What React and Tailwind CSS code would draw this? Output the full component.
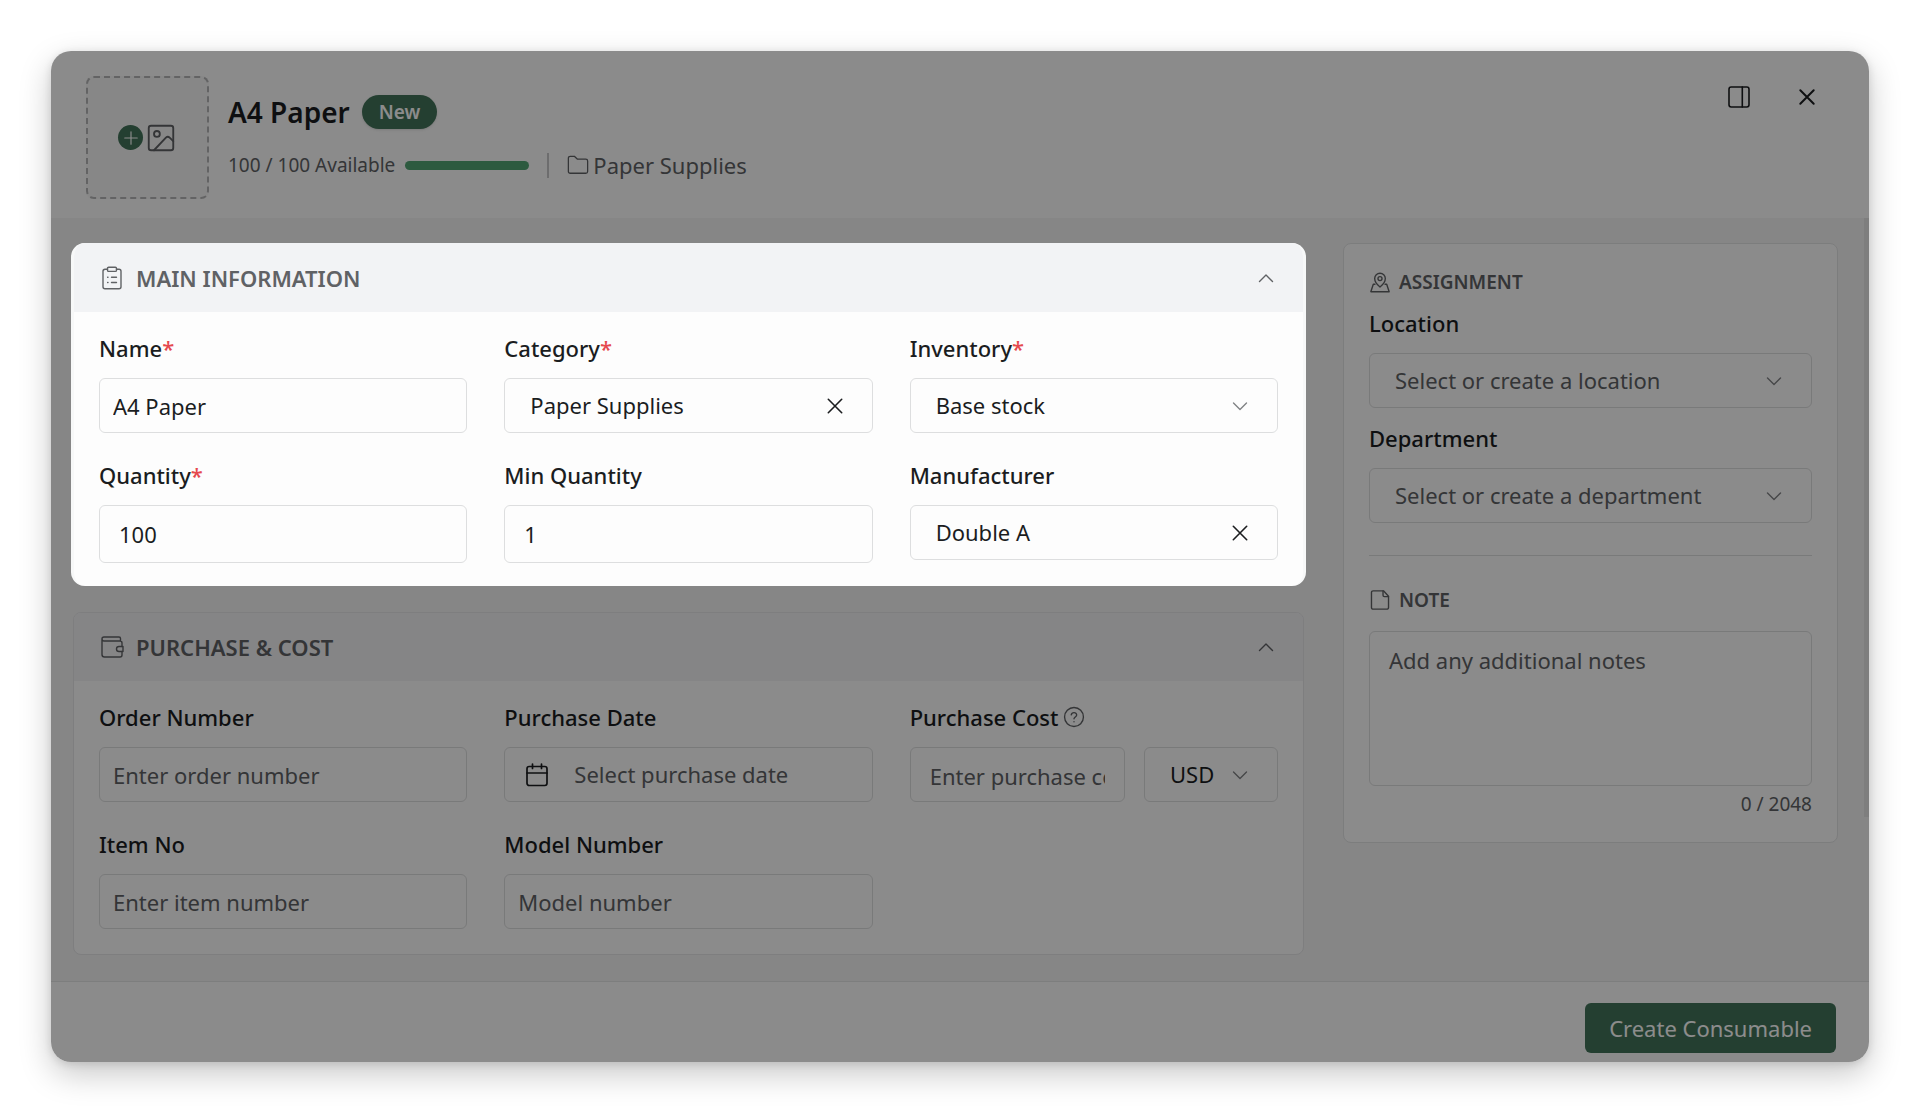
import { useState } from 'react'
import clsx from 'clsx'

const NOTE_LIMIT = 2048

const FIELD =
  'w-full h-[55px] rounded-md border border-[#dddedf] bg-transparent text-[22px] text-[#1b1d1f] placeholder:text-[#606265] placeholder:opacity-100 outline-none'

// ---- Icons ----

function Icon({ size = 24, stroke = 1.5, className, children }) {
  return (
    <svg
      width={size}
      height={size}
      viewBox="0 0 24 24"
      fill="none"
      stroke="currentColor"
      strokeWidth={stroke}
      strokeLinecap="round"
      strokeLinejoin="round"
      aria-hidden="true"
      className={clsx('shrink-0', className)}
    >
      {children}
    </svg>
  )
}

const ClipboardIcon = () => (
  <Icon stroke={1.4}>
    <path d="M7.5 3.300H5A2 2 0 0 0 3 5.300v15.500A2 2 0 0 0 5 22.800h14a2 2 0 0 0 2-2V5.300a2 2 0 0 0-2-2h-2.500" />
    <rect x="7.500" y="1.200" width="9" height="4.200" rx="1.200" />
    <path d="M7.600 11.300h.4M11.500 11.300h5M7.600 16.500h.4M11.500 16.500h5" />
  </Icon>
)

const WalletIcon = () => (
  <Icon stroke={1.4}>
    <path d="M20.500 6V3.500a1.500 1.500 0 0 0-1.500-1.500H4a2 2 0 0 0-2 2v15.500A2.500 2.500 0 0 0 4.500 22H20a2 2 0 0 0 2-2v-3.500M2 4a2 2 0 0 0 2 2h16a2 2 0 0 1 2 2v3.500" />
    <path d="M23 11.500h-4a2.500 2.500 0 0 0 0 5h4z" />
  </Icon>
)

const MapPinIcon = () => (
  <Icon size={22} stroke={1.5}>
    <path d="M12 17.500s-5.800-4.700-5.800-9.300a5.800 5.800 0 0 1 11.600 0c0 4.600-5.800 9.300-5.800 9.300z" />
    <circle cx="12" cy="8.300" r="2.200" />
    <path d="M6.500 14.500H4.700L2 22.600h20l-2.700-8.100h-1.800" />
  </Icon>
)

const NoteIcon = () => (
  <Icon size={22} stroke={1.5}>
    <path d="M15.800 2H4.500A1.800 1.800 0 0 0 2.700 3.800v16.400A1.800 1.800 0 0 0 4.500 22h15a1.800 1.800 0 0 0 1.800-1.800V8z" />
    <path d="M15.300 2v4.800A1.500 1.500 0 0 0 16.800 8.300h4.500" />
  </Icon>
)

const FolderIcon = () => (
  <Icon size={22} stroke={1.4}>
    <path d="M1.500 4.500A2 2 0 0 1 3.500 2.500H8l3.200 3h9.300a2 2 0 0 1 2 2V19a2 2 0 0 1-2 2h-17a2 2 0 0 1-2-2z" />
  </Icon>
)

const CalendarIcon = () => (
  <Icon size={24} stroke={1.7}>
    <rect x="2" y="3.500" width="20" height="19" rx="2.200" />
    <path d="M2 10h20M7.500 1v4.500M16.500 1v4.500" />
  </Icon>
)

const HelpIcon = () => (
  <Icon size={22} stroke={1.5}>
    <circle cx="12" cy="12" r="10.300" />
    <path d="M9 9.600A3 3 0 0 1 12 7.200a2.700 2.700 0 0 1 2.900 2.600c0 2-2.900 2.300-2.900 4.200M12 17.200v.1" />
  </Icon>
)

const PictureIcon = () => (
  <Icon size={28} stroke={1.6}>
    <rect x="1.500" y="1.500" width="21" height="21" rx="2" />
    <circle cx="8.500" cy="8.500" r="2.500" />
    <path d="M6 22.500L16.200 11.700a2.300 2.300 0 0 1 3.200 0l3.100 3" />
  </Icon>
)

const PanelIcon = () => (
  <Icon size={24} stroke={1.6}>
    <rect x="2" y="2" width="20" height="20" rx="2.200" />
    <path d="M15.300 2v20" />
  </Icon>
)

const CloseIcon = ({ size = 24, stroke = 1.6 }) => (
  <Icon size={size} stroke={stroke}>
    <path d="M5.300 5.300l13.400 13.400M18.700 5.300L5.300 18.700" />
  </Icon>
)

const ChevronIcon = ({ up, className }) => (
  <Icon stroke={1.4} className={className}>
    <path d={up ? 'M5.500 15.500L12 9l6.500 6.500' : 'M5.500 9L12 15.500L18.500 9'} />
  </Icon>
)

// ---- Form pieces ----

function Field({ id, label, required, help, children }) {
  return (
    <div className="flex min-w-0 flex-col gap-[14px]">
      <div className="flex items-center gap-1">
        <label htmlFor={id} className="text-[22px] leading-8 font-medium">
          {label}
          {required && <span className="text-[#e5484d]">*</span>}
        </label>
        {help && (
          <button type="button" aria-label={`About ${label}`} className="text-[#606265]">
            <HelpIcon />
          </button>
        )}
      </div>
      {children}
    </div>
  )
}

function Select({ id, label, value, onChange, options, placeholder, clearable }) {
  return (
    <div className="relative">
      <select
        id={id}
        aria-label={label}
        value={value}
        onChange={(e) => onChange(e.target.value)}
        className={clsx(FIELD, 'appearance-none pr-14 pl-[25px]', !value && 'text-[#606265]!')}
      >
        {placeholder && <option value="">{placeholder}</option>}
        {options.map((opt) => (
          <option key={opt} value={opt}>{opt}</option>
        ))}
      </select>
      {clearable && value ? (
        <button
          type="button"
          aria-label="Clear"
          onClick={() => onChange('')}
          className="absolute inset-y-0 right-[26px] flex items-center"
        >
          <CloseIcon />
        </button>
      ) : (
        <span className="pointer-events-none absolute inset-y-0 right-[26px] flex items-center text-[#808285]">
          <ChevronIcon />
        </span>
      )}
    </div>
  )
}

function Section({ icon, title, highlighted, children }) {
  const [open, setOpen] = useState(true)

  return (
    <section
      className={clsx(
        'overflow-hidden bg-[#fdfdfd]',
        highlighted
          ? 'relative z-10 -mx-0.5 rounded-[14px] border-x-3 border-[#f7f8f8]'
          : 'rounded-lg border border-[#e6e6e8]',
      )}
    >
      <h2>
        <button
          type="button"
          aria-expanded={open}
          onClick={() => setOpen(!open)}
          className={clsx(
            'flex w-full items-center pr-[25px] pl-[26px] text-[#606265]',
            highlighted ? 'h-[69px] bg-[#f2f3f5]' : 'h-[68px] bg-[#f2f2f5]',
          )}
        >
          {icon}
          <span className="ml-3 text-[22px] leading-8 font-semibold uppercase">{title}</span>
          <ChevronIcon up={open} className="ml-auto" />
        </button>
      </h2>
      {open && (
        <div
          className={clsx(
            'grid grid-cols-3 items-start gap-x-[37px] gap-y-[26px] px-[25px] pt-5',
            highlighted ? 'pb-[23px]' : 'pb-[25px]',
          )}
        >
          {children}
        </div>
      )}
    </section>
  )
}

function SideHeading({ icon, children }) {
  return (
    <h2 className="flex items-center gap-2 text-[19px] leading-7 font-semibold text-[#606265] uppercase">
      {icon}
      {children}
    </h2>
  )
}

export default function App() {
  const [form, setForm] = useState({
    name: 'A4 Paper',
    category: 'Paper Supplies',
    inventory: 'Base stock',
    quantity: '100',
    minQuantity: '1',
    manufacturer: 'Double A',
    orderNumber: '',
    cost: '',
    currency: 'USD',
    itemNo: '',
    modelNumber: '',
    location: '',
    department: '',
    note: '',
  })

  const set = (key) => (value) => setForm((prev) => ({ ...prev, [key]: value }))
  const bind = (key) => ({
    id: key,
    value: form[key],
    onChange: (e) => set(key)(e.target.value),
  })

  return (
    <div className="flex min-h-screen bg-white p-[51px] font-['Noto_Sans',sans-serif] text-[#1b1d1f]">
      <form
        onSubmit={(e) => e.preventDefault()}
        className="relative flex flex-1 flex-col overflow-hidden rounded-[20px] bg-[#f4f4f4] shadow-[0_12px_32px_rgba(0,0,0,0.22),0_2px_8px_rgba(0,0,0,0.12)]"
      >
        {/* Header */}
        <header className="flex items-start bg-[#fdfdfd] pt-[25px] pr-11 pb-[19px] pl-[35px]">
          <button
            type="button"
            aria-label="Add image"
            className="flex size-[123px] items-center justify-center gap-1 rounded-lg border-2 border-dashed border-[#b4b5b6] bg-[#f6f6f6] pr-0.5 text-[#606265]"
          >
            <span className="flex size-[25px] items-center justify-center rounded-full bg-[#427359] text-white">
              <Icon size={20} stroke={1.4}>
                <path d="M12 4.500v15M4.500 12h15" />
              </Icon>
            </span>
            <PictureIcon />
          </button>

          <div className="mt-4 ml-[19px] flex flex-col gap-[17px]">
            <div className="flex items-center gap-3">
              <h1 className="text-[28px] leading-10 font-semibold">{form.name}</h1>
              <span className="rounded-full bg-[#427359] px-[17px] py-[3px] text-[19px] leading-7 font-semibold text-white shadow-sm">
                New
              </span>
            </div>
            <div className="flex items-center text-[#606265]">
              <span className="text-[19px] leading-8">100 / 100 Available</span>
              <div className="ml-[10px] h-[9px] w-[124px] rounded-full bg-[#53a474]" />
              <div className="mx-[18px] h-[25px] w-0.5 bg-[#c6c7c8]" />
              <FolderIcon />
              <span className="ml-1 text-[22px] leading-8">{form.category}</span>
            </div>
          </div>

          <div className="mt-[3px] ml-auto flex gap-8">
            <button type="button" aria-label="Dock to side" className="flex size-9 items-center justify-center">
              <PanelIcon />
            </button>
            <button type="button" aria-label="Close" className="flex size-9 items-center justify-center">
              <CloseIcon stroke={2} />
            </button>
          </div>
        </header>

        {/* Body */}
        <div className="relative flex flex-1 items-start gap-[39px] pt-[25px] pr-[31px] pb-[25px] pl-[22px]">
          <div className="flex min-w-0 flex-1 flex-col gap-[26px]">
            <Section icon={<ClipboardIcon />} title="Main information" highlighted>
              <Field id="name" label="Name" required>
                <input type="text" {...bind('name')} className={clsx(FIELD, 'px-[13px]')} />
              </Field>
              <Field id="category" label="Category" required>
                <Select
                  id="category"
                  value={form.category}
                  onChange={set('category')}
                  options={['Paper Supplies']}
                  placeholder="Select or create a category"
                  clearable
                />
              </Field>
              <Field id="inventory" label="Inventory" required>
                <Select
                  id="inventory"
                  value={form.inventory}
                  onChange={set('inventory')}
                  options={['Base stock']}
                />
              </Field>
              <Field id="quantity" label="Quantity" required>
                <input type="text" inputMode="numeric" {...bind('quantity')} className={clsx(FIELD, 'h-[58px]! px-[19px]')} />
              </Field>
              <Field id="minQuantity" label="Min Quantity">
                <input type="text" inputMode="numeric" {...bind('minQuantity')} className={clsx(FIELD, 'h-[58px]! px-[19px]')} />
              </Field>
              <Field id="manufacturer" label="Manufacturer">
                <Select
                  id="manufacturer"
                  value={form.manufacturer}
                  onChange={set('manufacturer')}
                  options={['Double A']}
                  placeholder="Select or create a manufacturer"
                  clearable
                />
              </Field>
            </Section>

            <Section icon={<WalletIcon />} title="Purchase & cost">
              <Field id="orderNumber" label="Order Number">
                <input type="text" placeholder="Enter order number" {...bind('orderNumber')} className={clsx(FIELD, 'px-[13px]')} />
              </Field>
              <Field id="purchaseDate" label="Purchase Date">
                <button
                  id="purchaseDate"
                  type="button"
                  className={clsx(FIELD, 'flex items-center gap-[25px] px-5')}
                >
                  <CalendarIcon />
                  <span className="text-[#606265]">Select purchase date</span>
                </button>
              </Field>
              <Field id="cost" label="Purchase Cost" help>
                <div className="flex gap-[19px]">
                  <div className="min-w-0 flex-1">
                    <input type="text" inputMode="decimal" placeholder="Enter purchase cost" {...bind('cost')} className={clsx(FIELD, 'px-[19px] pt-0.5')} />
                  </div>
                  <div className="w-[134px]">
                    <Select
                      id="currency"
                      label="Currency"
                      value={form.currency}
                      onChange={set('currency')}
                      options={['USD', 'EUR', 'GBP']}
                    />
                  </div>
                </div>
              </Field>
              <Field id="itemNo" label="Item No">
                <input type="text" placeholder="Enter item number" {...bind('itemNo')} className={clsx(FIELD, 'px-[13px]')} />
              </Field>
              <Field id="modelNumber" label="Model Number">
                <input type="text" placeholder="Model number" {...bind('modelNumber')} className={clsx(FIELD, 'px-[13px]')} />
              </Field>
            </Section>
          </div>

          <aside className="w-[495px] shrink-0 rounded-lg border border-[#e2e3e4] bg-[#fdfdfd] px-[25px] py-6">
            <SideHeading icon={<MapPinIcon />}>Assignment</SideHeading>
            <div className="mt-[11px] flex flex-col gap-[14px]">
              <Field id="location" label="Location">
                <Select
                  id="location"
                  value={form.location}
                  onChange={set('location')}
                  options={[]}
                  placeholder="Select or create a location"
                />
              </Field>
              <Field id="department" label="Department">
                <Select
                  id="department"
                  value={form.department}
                  onChange={set('department')}
                  options={[]}
                  placeholder="Select or create a department"
                />
              </Field>
            </div>

            <hr className="mt-8 mb-[30px] border-[#dddedf]" />

            <SideHeading icon={<NoteIcon />}>Note</SideHeading>
            <textarea
              {...bind('note')}
              aria-label="Note"
              maxLength={NOTE_LIMIT}
              placeholder="Add any additional notes"
              className={clsx(FIELD, 'mt-[17px] block h-[155px]! resize-none px-[19px] py-3 leading-8')}
            />
            <p className="mt-1 text-right text-[19px] leading-7 text-[#606265]">
              {form.note.length} / {NOTE_LIMIT}
            </p>
          </aside>

          {/* Scroll thumb */}
          <div className="absolute top-0 right-0 h-[599px] w-[5px] bg-[#e6e6e6]" />
        </div>

        {/* Footer */}
        <footer className="flex justify-end border-t border-[#e4e5e6] bg-[#fdfdfd] pt-[21px] pr-[33px] pb-[9px]">
          <button type="submit" className="h-[50px] rounded-md bg-[#427359] px-6 text-[22px] text-white">
            Create Consumable
          </button>
        </footer>

        {/* Dims everything but the highlighted section */}
        <div className="pointer-events-none absolute inset-0 bg-black/45" />
      </form>
    </div>
  )
}
